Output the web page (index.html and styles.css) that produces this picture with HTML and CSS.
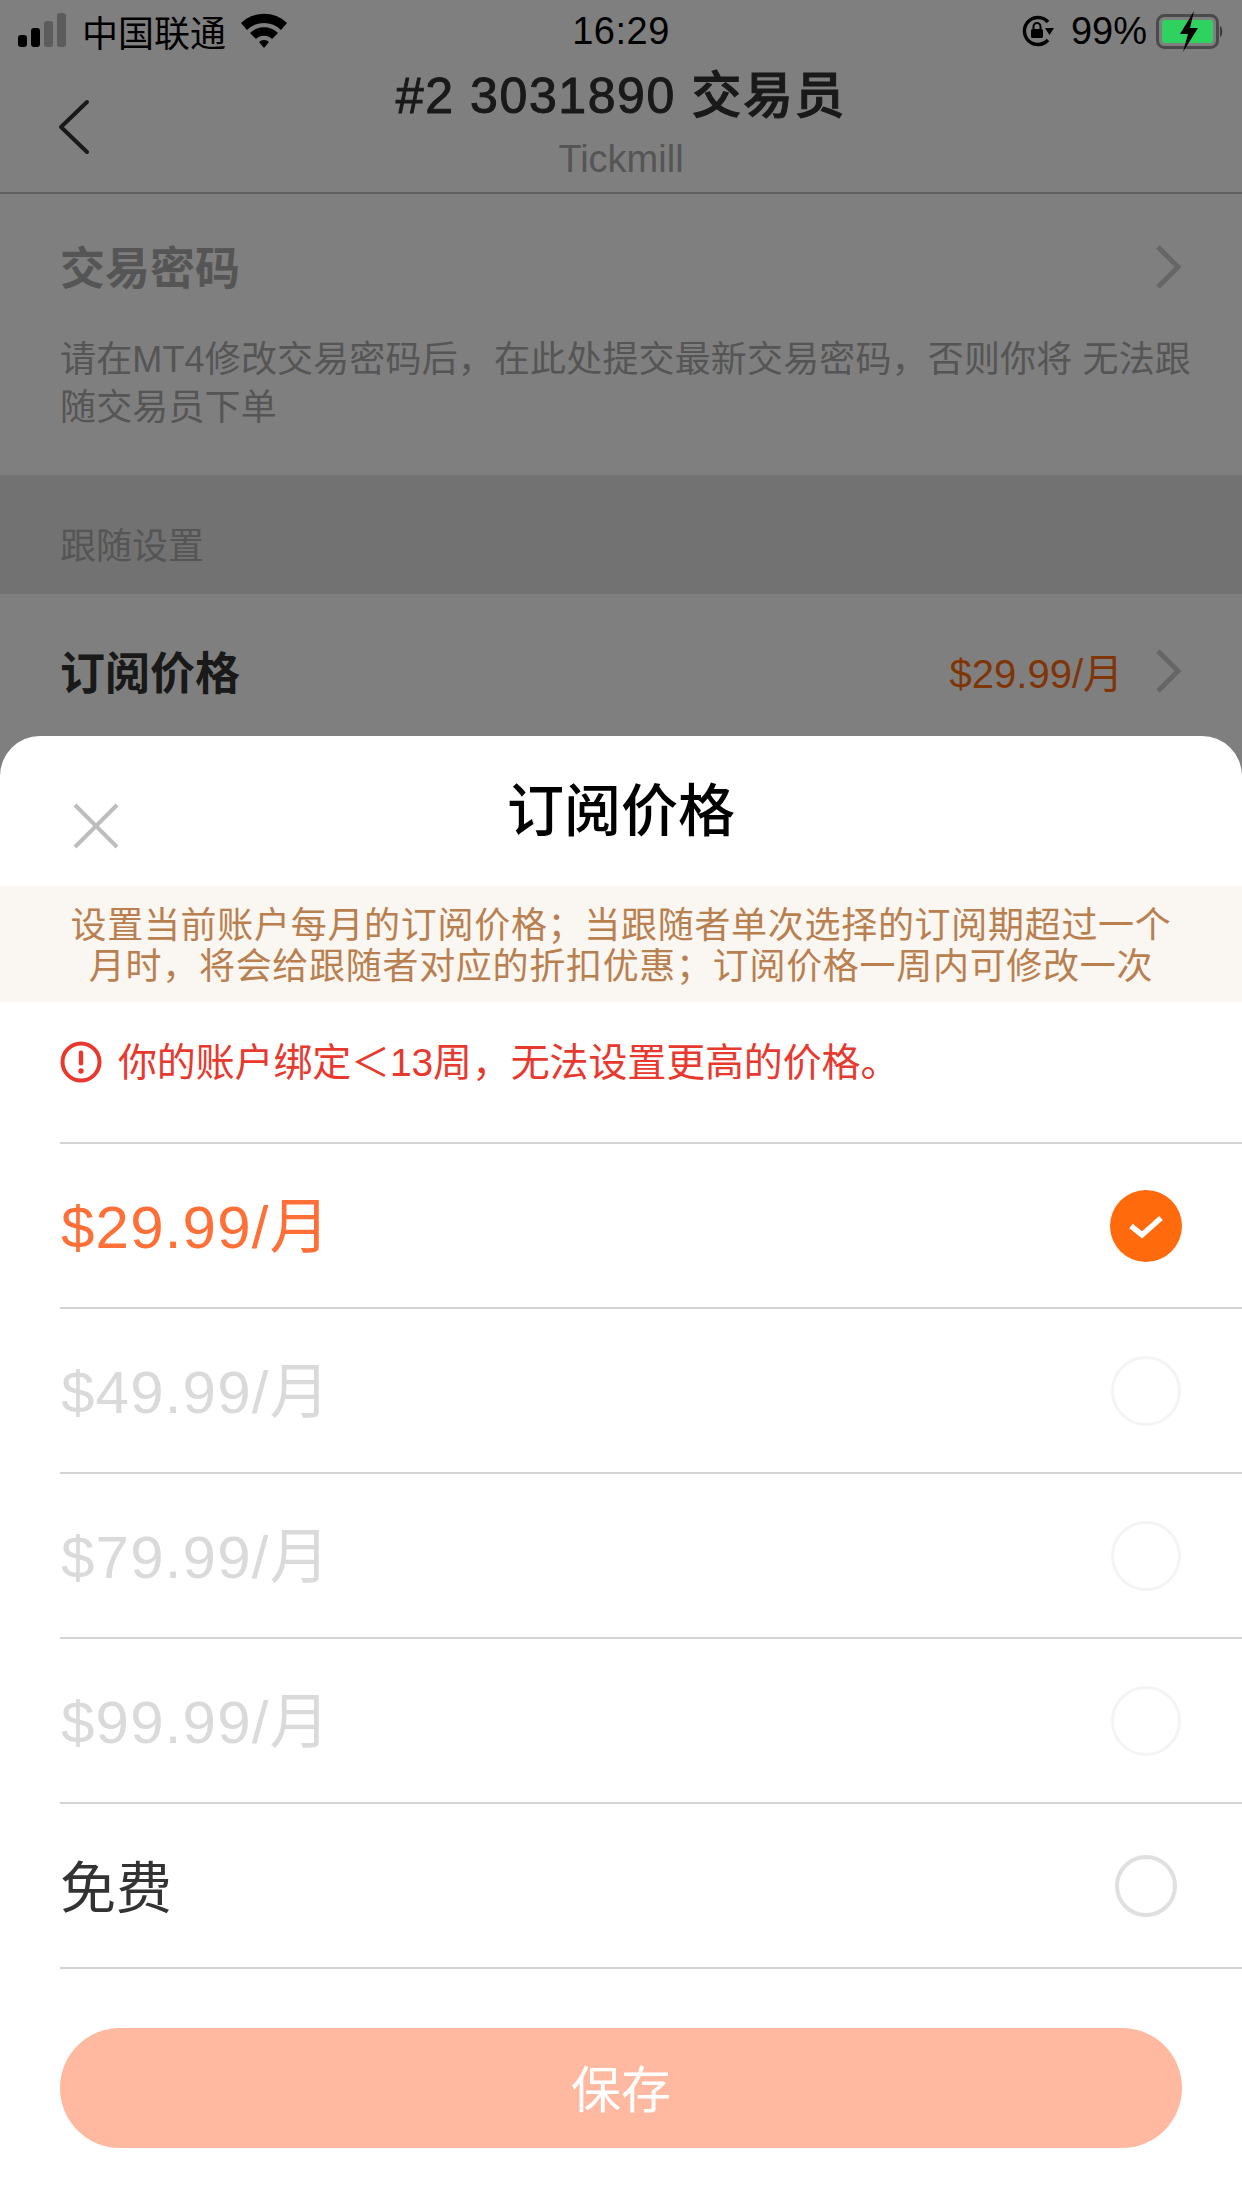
FILE: index.html
```html
<!DOCTYPE html>
<html lang="zh-CN">
<head>
  <meta charset="UTF-8">
  <title>订阅价格</title>
  <link rel="stylesheet" href="styles.css">
</head>
<body>
  <div class="screen">
    <div class="statusbar">
      <div class="status-left">
        <svg class="signal" width="52" height="36" viewBox="0 0 52 36">
          <rect x="0" y="22" width="9" height="12" rx="3" fill="#000"/>
          <rect x="13" y="15" width="9" height="19" rx="3" fill="#000"/>
          <rect x="26" y="8" width="9" height="26" rx="3" fill="#5c5c5c"/>
          <rect x="39" y="0" width="9" height="34" rx="3" fill="#5c5c5c"/>
        </svg>
        <span>中国联通</span>
        <svg class="wifi" width="48" height="38" viewBox="0 0 48 38">
          <path d="M1 11 A33 33 0 0 1 47 11 L41 18 A24 24 0 0 0 7 18 Z" fill="#000"/>
          <path d="M10 21 A20 20 0 0 1 38 21 L32 27 A11.5 11.5 0 0 0 16 27 Z" fill="#000"/>
          <path d="M19 30 A7 7 0 0 1 29 30 L24 36 Z" fill="#000"/>
        </svg>
      </div>
      <div class="status-time">16:29</div>
      <div class="status-right">
        <svg class="lock" width="34" height="34" viewBox="0 0 34 34">
          <path d="M27 8 A13.5 13.5 0 1 0 27 26" fill="none" stroke="#000" stroke-width="3.4"/>
          <path d="M24 14 L33 14 L28.5 21 Z" fill="#000"/>
          <rect x="10" y="15" width="12" height="9" rx="1.5" fill="#000"/>
          <path d="M12.5 15 V12.5 A3.5 3.5 0 0 1 19.500 12.5 V15" fill="none" stroke="#000" stroke-width="2"/>
        </svg>
        <span class="battery-pct">99%</span>
        <svg class="battery" width="68" height="42" viewBox="0 0 68 42">
          <rect x="1.500" y="5.500" width="60" height="32" rx="7" fill="none" stroke="#4a4a4a" stroke-width="3"/>
          <rect x="6" y="10" width="51" height="23" rx="2.500" fill="#2fd15f"/>
          <path d="M64 16 C67 17 67 26 64 27 Z" fill="#3a3a3a"/>
          <path d="M38 1 L24 24 L32 24 L27 42 L42 18 L34 18 Z" fill="#000"/>
        </svg>
      </div>
    </div>

    <header class="navbar">
      <svg class="back" width="34" height="56" viewBox="0 0 34 56">
        <path d="M30 3 L4 28 L30 53" fill="none" stroke="#333" stroke-width="4" stroke-linecap="round" stroke-linejoin="round"/>
      </svg>
      <div class="nav-title">
        <div class="nav-name">#2 3031890 交易员</div>
        <div class="nav-sub">Tickmill</div>
      </div>
    </header>

    <section class="password">
      <div class="row-head">
        <span class="row-label muted">交易密码</span>
        <svg class="chevron" width="28" height="46" viewBox="0 0 28 46">
          <path d="M4 3 L24 23 L4 43" fill="none" stroke="#ccc" stroke-width="5"/>
        </svg>
      </div>
      <p class="password-note">请在MT4修改交易密码后，在此处提交最新交易密码，否则你将 无法跟随交易员下单</p>
    </section>

    <div class="group-title">跟随设置</div>

    <section class="sub-row">
      <span class="row-label">订阅价格</span>
      <span class="sub-value">$29.99/月</span>
      <svg class="chevron" width="28" height="46" viewBox="0 0 28 46">
        <path d="M4 3 L24 23 L4 43" fill="none" stroke="#ccc" stroke-width="5"/>
      </svg>
    </section>

    <div class="scrim"></div>

    <div class="sheet">
      <div class="sheet-head">
        <svg class="close" width="46" height="46" viewBox="0 0 46 46">
          <path d="M2 2 L44 44 M44 2 L2 44" fill="none" stroke="#bdbdbd" stroke-width="4"/>
        </svg>
        <h1 class="sheet-title">订阅价格</h1>
      </div>
      <p class="notice">设置当前账户每月的订阅价格；当跟随者单次选择的订阅期超过一个月时，将会给跟随者对应的折扣优惠；订阅价格一周内可修改一次</p>
      <div class="warning">
        <svg width="42" height="42" viewBox="0 0 42 42">
          <circle cx="21" cy="21" r="18.500" fill="none" stroke="#e8392f" stroke-width="4"/>
          <rect x="18.800" y="9.500" width="4.400" height="15" rx="2" fill="#e8392f"/>
          <circle cx="21" cy="30" r="2.700" fill="#e8392f"/>
        </svg>
        <span class="warning-text">你的账户绑定＜13周，无法设置更高的价格。</span>
      </div>
      <ul class="plans">
        <li class="plan active">
          <span class="plan-name">$29.99/月</span>
          <svg class="tick" width="72" height="72" viewBox="0 0 72 72">
            <circle cx="36" cy="36" r="36" fill="#ff6a0d"/>
            <path d="M21 36 L32 45 L51 28" fill="none" stroke="#fff" stroke-width="5.500"/>
          </svg>
        </li>
        <li class="plan disabled">
          <span class="plan-name">$49.99/月</span>
          <span class="radio"></span>
        </li>
        <li class="plan disabled">
          <span class="plan-name">$79.99/月</span>
          <span class="radio"></span>
        </li>
        <li class="plan disabled">
          <span class="plan-name">$99.99/月</span>
          <span class="radio"></span>
        </li>
        <li class="plan free">
          <span class="plan-name">免费</span>
          <span class="radio"></span>
        </li>
      </ul>
      <button class="save">保存</button>
    </div>
  </div>
</body>
</html>
```

FILE: styles.css
```css
* {
  box-sizing: border-box;
}
body {
  margin: 0;
  background: #fff;
  font-family: "Liberation Sans", "Noto Sans CJK SC", sans-serif;
  color: #333;
}
.screen {
  position: relative;
  width: 1242px;
  height: 2208px;
  overflow: hidden;
  background: #fff;
}

/* status bar sits above the scrim */
.statusbar {
  position: relative;
  z-index: 2;
  height: 62px;
  padding: 0 18px;
  display: grid;
  grid-template-columns: 1fr auto 1fr;
  align-items: center;
  font-size: 36px;
  color: #000;
}
.status-left {
  display: flex;
  align-items: center;
}
.signal {
  margin-right: 12px;
}
.wifi {
  margin-left: 14px;
}
.status-time {
  font-size: 38px;
  letter-spacing: 0.5px;
}
.status-right {
  display: flex;
  align-items: center;
  justify-content: flex-end;
}
.lock {
  margin-right: 16px;
}
.battery-pct {
  font-size: 38px;
  margin-right: 9px;
}

.navbar {
  height: 131px;
  position: relative;
  border-bottom: 2px solid #c0c0c0;
}
.back {
  position: absolute;
  left: 57px;
  top: 36px;
}
.nav-title {
  text-align: center;
}
.nav-name {
  font-size: 50px;
  font-weight: 500;
  line-height: 66px;
  margin-top: 1px;
  letter-spacing: 1.6px;
  color: #333;
  -webkit-text-stroke: 1px #333;
}
.nav-sub {
  font-size: 38px;
  line-height: 44px;
  margin-top: 8px;
  color: #aaa;
}

.password {
  height: 281px;
  padding: 0 60px;
}
.row-head {
  height: 142px;
  display: flex;
  align-items: center;
  justify-content: space-between;
}
.row-head .chevron {
  margin-top: 4px;
}
.row-label {
  font-size: 45px;
  font-weight: 700;
  color: #333;
}
.row-label.muted {
  color: #aaa;
}
.password-note {
  margin: 0 -28px 0 0;
  font-size: 36px;
  line-height: 48px;
  letter-spacing: 0.15px;
  color: #aaa;
}

.group-title {
  height: 119px;
  padding: 16px 60px 0;
  display: flex;
  align-items: center;
  font-size: 36px;
  color: #aaa;
  background: #e4e4e4;
}

.sub-row {
  height: 143px;
  padding: 10px 60px 0;
  display: flex;
  align-items: center;
}
.sub-value {
  margin-left: auto;
  margin-right: 31px;
  font-size: 40px;
  color: #ff6a0d;
}

.scrim {
  position: absolute;
  inset: 0;
  z-index: 1;
  background: rgba(0, 0, 0, 0.5);
}

.sheet {
  position: absolute;
  left: 0;
  right: 0;
  bottom: 0;
  z-index: 3;
  height: 1472px;
  background: #fff;
  border-radius: 40px 40px 0 0;
}
.sheet-head {
  height: 150px;
  position: relative;
}
.close {
  position: absolute;
  left: 73px;
  top: 67px;
}
.sheet-title {
  margin: 0;
  padding-top: 36px;
  text-align: center;
  font-size: 57px;
  line-height: 78px;
  font-weight: 500;
  color: #000;
}
.notice {
  margin: 0;
  height: 116px;
  padding: 19px 60px 0;
  text-align: center;
  font-size: 36px;
  line-height: 41px;
  letter-spacing: 0.7px;
  color: #b97f4f;
  background: #faf6f1;
}
.warning {
  height: 140px;
  padding: 0 60px 20px;
  display: flex;
  align-items: center;
  gap: 16px;
  font-size: 39px;
  letter-spacing: -0.15px;
  color: #e8392f;
}
.warning-text {
  margin-bottom: 6px;
}
.plans {
  list-style: none;
  margin: 0 0 0 60px;
  padding: 0;
  border-top: 2px solid #d4d4d4;
}
.plan {
  height: 165px;
  padding-right: 60px;
  display: flex;
  align-items: center;
  justify-content: space-between;
  border-bottom: 2px solid #d4d4d4;
}
.plan-name {
  font-size: 60px;
  letter-spacing: 1.2px;
  margin: 0 0 9px 1px;
}
.active .plan-name {
  color: #ff7038;
}
.disabled .plan-name {
  color: #dadada;
}
.free .plan-name {
  font-size: 56px;
  letter-spacing: 0;
  margin: 0 0 4px;
  color: #333;
}
.radio {
  width: 70px;
  height: 70px;
  margin-right: 1px;
  border-radius: 50%;
  border: 3px solid #f4f4f4;
}
.free .radio {
  width: 62px;
  height: 62px;
  margin-right: 5px;
  border: 4px solid #e0e0e0;
}
.save {
  display: block;
  width: 1122px;
  height: 120px;
  margin: 59px auto 0;
  padding-bottom: 6px;
  border: none;
  border-radius: 60px;
  font-family: inherit;
  font-size: 50px;
  color: #fff;
  background: #ffb9a1;
}
```
